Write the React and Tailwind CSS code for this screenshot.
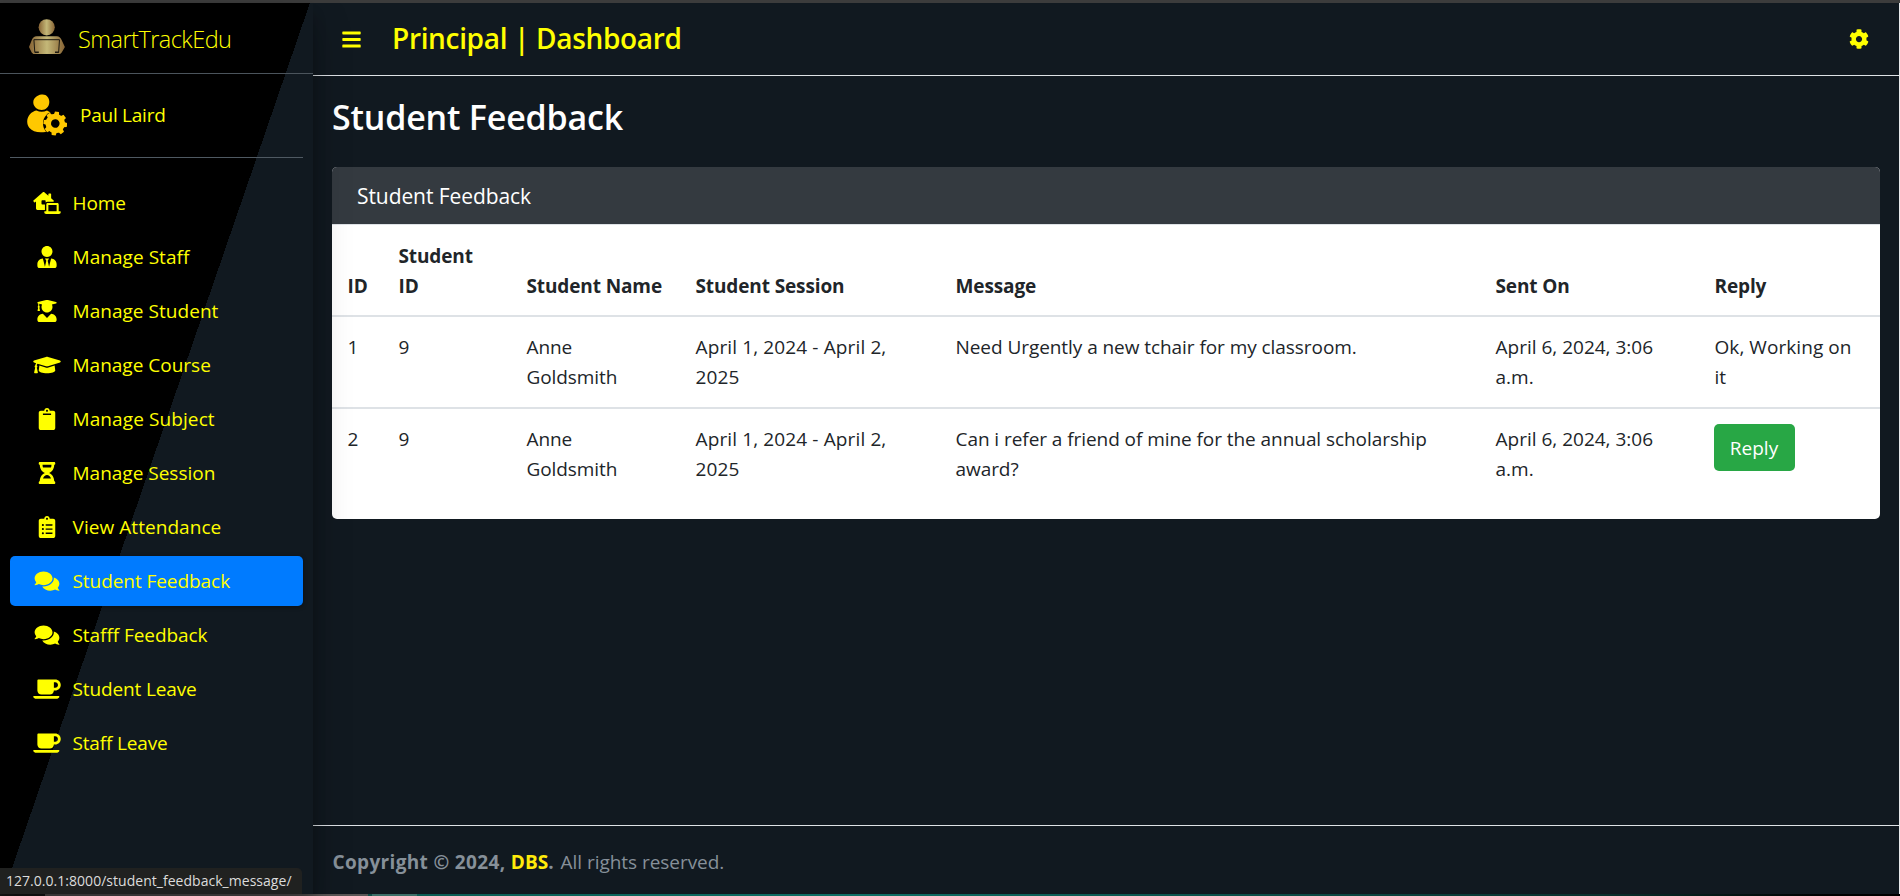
import {
  FaBars,
  FaClipboard,
  FaClipboardList,
  FaCoffee,
  FaCog,
  FaComments,
  FaGraduationCap,
  FaHourglassHalf,
  FaLaptopHouse,
  FaUserGraduate,
  FaUserTie,
} from "react-icons/fa";

const NAV = [
  { label: "Home", icon: FaLaptopHouse, size: "w-7 h-[22px]", track: "tracking-[-0.1px]" },
  { label: "Manage Staff", icon: FaUserTie, size: "w-[22px] h-[22px]", track: "tracking-[0.05px]" },
  { label: "Manage Student", icon: FaUserGraduate, size: "w-[22px] h-[22px]", track: "tracking-[0.04px]" },
  { label: "Manage Course", icon: FaGraduationCap, size: "w-7 h-[22px]", track: "tracking-normal" },
  { label: "Manage Subject", icon: FaClipboard, size: "w-[22px] h-[22px]", track: "tracking-[0.1px]" },
  { label: "Manage Session", icon: FaHourglassHalf, size: "w-[22px] h-[22px]", track: "tracking-normal" },
  { label: "View Attendance", icon: FaClipboardList, size: "w-[22px] h-[22px]", track: "tracking-[0.06px]" },
  { label: "Student Feedback", icon: FaComments, size: "w-[26px] h-[22px]", track: "tracking-[-0.06px]", active: true },
  { label: "Stafff Feedback", icon: FaComments, size: "w-[26px] h-[22px]", track: "tracking-[-0.06px]" },
  { label: "Student Leave", icon: FaCoffee, size: "w-7 h-[22px]", track: "tracking-[-0.13px]" },
  { label: "Staff Leave", icon: FaCoffee, size: "w-7 h-[22px]", track: "tracking-[-0.16px]" },
];

const COLUMNS = [
  { label: "ID", width: "w-[51px]" },
  { label: "Student ID", width: "w-[128px] pr-8" },
  { label: "Student Name", width: "w-[169px]" },
  { label: "Student Session", width: "w-[260px]" },
  { label: "Message", width: "w-[540px]" },
  { label: "Sent On", width: "w-[219px]" },
  { label: "Reply", width: "w-[181px]" },
];

const ROWS = [
  {
    id: 1,
    message: "Need Urgently a new tchair for my classroom.",
    reply: "Ok, Working on it",
  },
  {
    id: 2,
    message: "Can i refer a friend of mine for the annual scholarship award?",
    reply: null,
  },
];

function BrandLogo() {
  return (
    <svg viewBox="0 0 36 36" className="h-9 w-9 shrink-0" aria-hidden="true">
      <defs>
        <linearGradient id="gold" x1="0" x2="1" y1="0" y2="0">
          <stop offset="0" stopColor="#876334" />
          <stop offset="0.5" stopColor="#c4b878" />
          <stop offset="1" stopColor="#876334" />
        </linearGradient>
      </defs>
      <ellipse cx="17.7" cy="8.3" rx="8.1" ry="8.1" fill="url(#gold)" />
      <path
        d="M7.5 17.2h20.4c2.2 0 3.5 1.2 4.6 3.6l3.4 7.2-3.2 5.6-1.6 1.4H4.3l-1.6-1.4L0 28l2.9-7.2c1-2.4 2.4-3.6 4.6-3.6z"
        fill="url(#gold)"
      />
      <path d="M5.800 33.600l-.9-12.900h25.600l-.9 12.900" fill="none" stroke="#1c1810" strokeWidth="1" />
      <path d="M6 32.500h3.800v1.600H6zM26 32.500h3.800v1.600H26z" fill="#1c1810" />
    </svg>
  );
}

function UserGear() {
  return (
    <svg viewBox="0 0 40 42" className="h-[42px] w-10 shrink-0" aria-hidden="true">
      <path d="M14.5.6c4.8-.7 8 3 7.8 7.6-.2 4.6-3.4 7.7-7.6 7.7S6.500 12.800 6.300 8.700 9.700 1.300 14.500.6z" fill="#ffc800" />
      <path
        d="M9.500 16.400c3.200 1.700 7.200 1.700 10.500 0l4.500 2.500v12l-6 7C11 39 5.500 37.500 2.500 34 .2 31.200-.3 27.300.7 24.300c1.300-4.200 4.900-7.300 8.800-7.900z"
        fill="#ffc800"
      />
      <circle cx="28.300" cy="29.500" r="12.300" fill="#000" />
      <g fill="#ffc800" transform="translate(28.300 29.500) rotate(8)">
        <path
          fillRule="evenodd"
          d="M-9.700 0a9.700 9.700 0 1 0 19.400 0a9.700 9.700 0 1 0-19.400 0zM-4.300 0a4.300 4.300 0 1 1 8.600 0a4.300 4.300 0 1 1-8.600 0z"
        />
        {[0, 45, 90, 135, 180, 225, 270, 315].map((angle) => (
          <path key={angle} d="M-2.700-8.500l.700-3.300h4l.700 3.300z" transform={`rotate(${angle})`} />
        ))}
      </g>
    </svg>
  );
}

function Sidebar() {
  return (
    <aside className="relative z-10 flex w-[313px] shrink-0 flex-col bg-[linear-gradient(109deg,#000_50%,#111920_50%)] shadow-[0_18px_35px_rgba(0,0,0,0.25),0_12px_12px_rgba(0,0,0,0.22)]">
      <a className="flex h-[71px] shrink-0 items-start border-b border-[#4b545c] pt-4 pl-[29px]">
        <BrandLogo />
        <span className="ml-[13px] pt-px text-[23.5px] leading-[38px] font-light tracking-[-0.53px]">SmartTrackEdu</span>
      </a>
      <div className="mx-[10px] flex h-[84px] shrink-0 items-start border-b border-[#4f5962] pt-5 pl-[17px]">
        <UserGear />
        <span className="ml-[13px] pt-[6px] text-[19px] leading-[30px] tracking-[-0.25px]">Paul Laird</span>
      </div>
      <nav className="mx-[10px] mt-5 flex flex-col gap-1">
        {NAV.map(({ label, icon: Icon, size, track, active }) => (
          <a
            key={label}
            className={`flex h-[50px] items-center rounded-[5px] pl-[21px] text-[19px] ${
              active ? "bg-[#007bff] shadow-[0_1px_4px_rgba(0,0,0,0.4)]" : ""
            }`}
          >
            <span className="flex w-8 justify-center pb-px">
              <Icon className={size} preserveAspectRatio="xMidYMid meet" />
            </span>
            <span className={`ml-[9.5px] pt-px whitespace-nowrap ${track}`}>{label}</span>
          </a>
        ))}
      </nav>
      <div className="absolute bottom-0 left-0 h-[26px] w-[302px] rounded-tr-[5px] bg-[#202120] pl-[6px] text-[14px] leading-[25px] tracking-[0.03px] whitespace-nowrap text-[#dcdcdc]">
        127.0.0.1:8000/student_feedback_message/
      </div>
    </aside>
  );
}

function FeedbackTable() {
  return (
    <table className="w-full table-fixed text-[19px] leading-[30px] text-[#212529]">
      <thead>
        <tr className="border-b-2 border-[#dee2e6] text-left align-bottom tracking-[-0.12px]">
          {COLUMNS.map(({ label, width }) => (
            <th key={label} className={`${width} px-[15.500px] pt-4 pb-[14px] font-bold`}>
              {label}
            </th>
          ))}
        </tr>
      </thead>
      <tbody>
        {ROWS.map(({ id, message, reply }) => (
          <tr
            key={id}
            className="border-b-2 border-[#dee2e6] align-top last:border-0 [&>td]:px-[15.5px] [&>td]:pt-[15px] [&>td]:pb-[15px]"
          >
            <td>{id}</td>
            <td>9</td>
            <td className="tracking-[-0.08px]">Anne Goldsmith</td>
            <td className="tracking-[0.13px]">April 1, 2024 - April 2, 2025</td>
            <td className="tracking-[-0.06px]">{message}</td>
            <td>April 6, 2024, 3:06 a.m.</td>
            <td className="tracking-[0.06px]">
              {reply ?? (
                <button className="-ml-px block h-[47px] w-[81px] rounded-[5px] bg-[#28a745] pt-px text-white">
                  Reply
                </button>
              )}
            </td>
          </tr>
        ))}
      </tbody>
    </table>
  );
}

export default function App() {
  return (
    <div className="flex h-[896px] w-[1900px] flex-col overflow-hidden bg-[#111920] font-['Open_Sans','Noto_Sans',sans-serif] text-[#ffff00]">
      <div className="h-[3px] shrink-0 bg-[#3c3c3c]" />
      <div className="flex min-h-0 flex-1">
        <Sidebar />
        <div className="flex min-w-0 flex-1 flex-col border-r border-[#e8eaec]">
          <header className="flex h-[73px] shrink-0 items-center border-b border-[#dee2e6] pr-[30px] pl-7">
            <FaBars className="h-[21px] w-[21px]" />
            <h4 className="ml-[30px] pb-[2px] text-[28px] leading-[34px] font-semibold tracking-[-0.33px]">
              Principal | Dashboard
            </h4>
            <FaCog className="ml-auto h-5 w-5" />
          </header>
          <main className="flex-1 px-[19px] pt-[20px]">
            <h1 className="text-[34px] leading-[43px] font-semibold tracking-[-0.19px] text-white">
              Student Feedback
            </h1>
            <section className="mt-[28px] h-[352px] w-[1548px] overflow-hidden rounded-[5px] bg-white">
              <h3 className="h-[58px] border-b border-[#dee2e6] bg-[#343a40] pl-[25px] text-[21px] leading-[58px] tracking-[-0.08px] text-white">
                Student Feedback
              </h3>
              <FeedbackTable />
            </section>
          </main>
          <footer className="h-[69px] shrink-0 border-t border-[#dee2e6] pt-[21px] pl-[19.5px] text-[19px] leading-[30px] text-[#869099]">
            <strong className="tracking-[0.34px]">
              Copyright © 2024, <span className="tracking-[0.1px] text-[#ffeb0a]">DBS</span>.
            </strong>{" "}
            <span className="pl-[1.5px] tracking-[-0.04px]">All rights reserved.</span>
          </footer>
        </div>
      </div>
      <div className="flex h-[2px] shrink-0 bg-black">
        <div className="w-[45px] bg-[#181818]" />
        <div className="w-[323px] bg-[#5a5656]" />
        <div className="w-[4px] bg-[#0f4f48]" />
        <div className="w-[45px] bg-[#3d6f68]" />
        <div className="flex-1 bg-[linear-gradient(90deg,#0b5c53_0%,#0e6f65_30%,#0a2f2c_80%,#000_95%)]" />
      </div>
    </div>
  );
}
